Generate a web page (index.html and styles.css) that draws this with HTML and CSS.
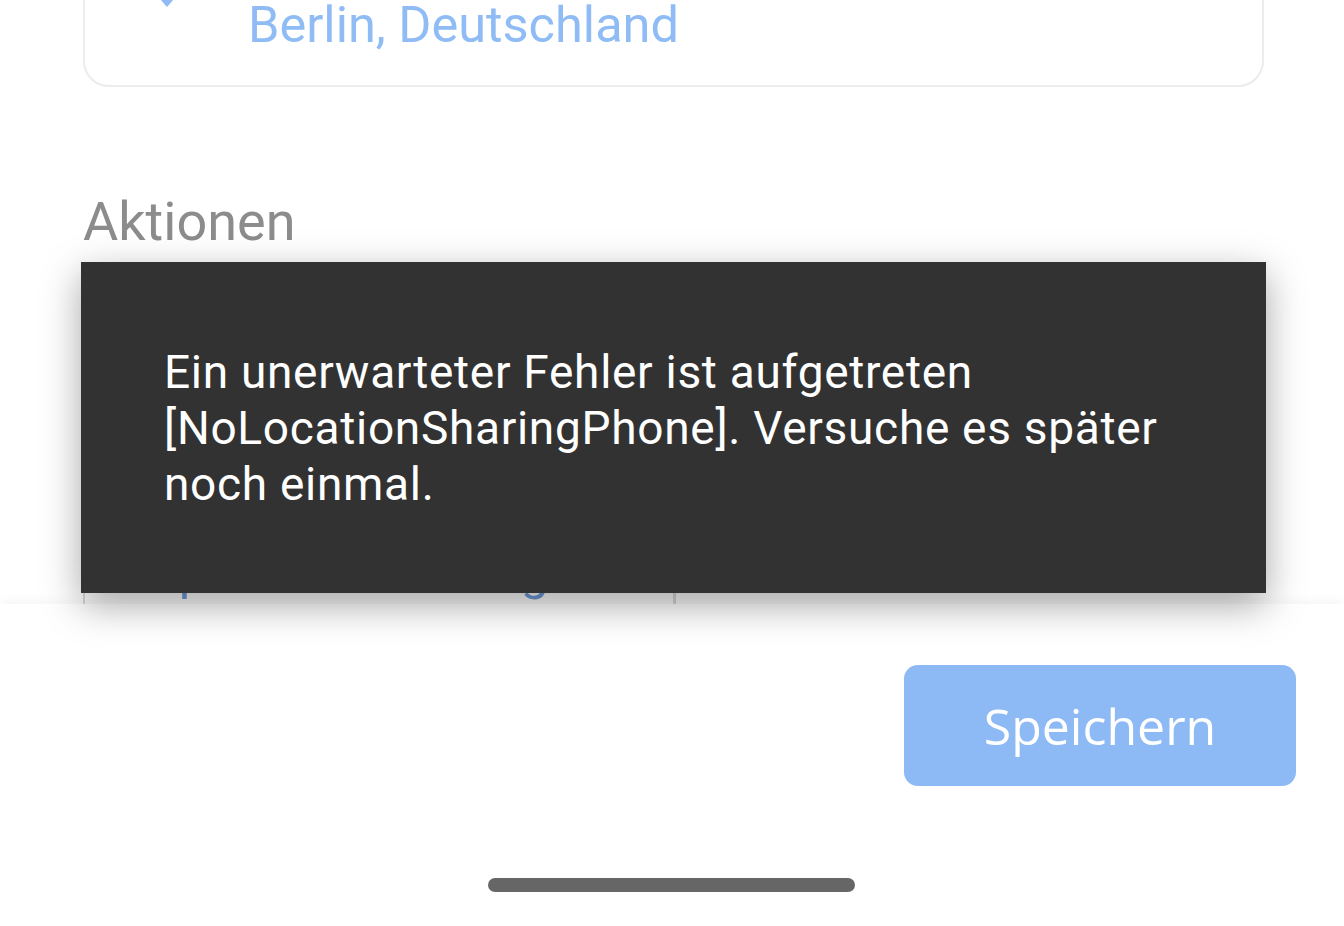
FILE: index.html
```html
<!DOCTYPE html>
<html lang="de">
<head>
    <meta charset="UTF-8">
    <meta name="viewport" content="width=device-width, initial-scale=1.0">
    <title>Aktionen</title>
    <link rel="stylesheet" href="styles.css">
</head>
<body>
    <div class="screen">
        <div class="content">
            <div class="location-card">
                <svg class="pin" width="48" height="60" viewBox="0 0 24 30">
                    <path d="M12 2C7.6 2 4 5.6 4 10c0 5.8 8 14 8 14s8-8.2 8-14c0-4.4-3.6-8-8-8zm0 11a3 3 0 1 1 0-6 3 3 0 0 1 0 6z" fill="#8fbcf5"/>
                </svg>
                <div class="location-value">Berlin, Deutschland</div>
            </div>

            <h2 class="section-title">Aktionen</h2>

            <div class="actions-card">
                <div class="action">Später erneut fragen</div>
                <div class="action">Teilen</div>
            </div>
        </div>

        <div class="snackbar">
            <p>Ein unerwarteter Fehler ist aufgetreten [NoLocationSharingPhone]. Versuche es später noch einmal.</p>
        </div>

        <div class="bottom-bar">
            <div class="bar-row">
                <button class="save-button">Speichern</button>
            </div>
            <div class="home-indicator"></div>
        </div>
    </div>
</body>
</html>
```

FILE: styles.css
```css
body {
    margin: 0;
    padding: 0;
    background: #fff;
    font-family: Roboto, "Liberation Sans", sans-serif;
    overflow: hidden;
}

.screen {
    position: relative;
    width: 1344px;
    height: 926px;
    overflow: hidden;
}

.content {
    padding: 0 80px 0 83px;
    margin-top: -93px;
}

.location-card {
    display: flex;
    align-items: flex-end;
    height: 180px;
    border: 2px solid #ececec;
    border-radius: 26px;
    box-sizing: border-box;
    padding: 0 0 35px 58px;
}

.pin {
    margin-bottom: 31px;
    margin-right: 57px;
}

.location-value {
    font-size: 50.5px;
    line-height: 50px;
    color: #8fbcf5;
}

.section-title {
    margin: 103px 0 0;
    font-size: 54px;
    line-height: 64px;
    font-weight: 400;
    color: #8c8c8c;
}

.actions-card {
    display: flex;
    margin-top: 20px;
    height: 400px;
    border: 2px solid #dcdcdc;
    border-right: none;
    border-radius: 20px 0 0 20px;
}

.action {
    flex: 1;
    padding: 267px 0 0 64px;
    font-size: 50px;
    color: #6f9ddb;
}

.action + .action {
    border-left: 3px solid #dcdcdc;
}

.snackbar {
    position: absolute;
    left: 81px;
    top: 262px;
    width: 1185px;
    height: 331px;
    box-sizing: border-box;
    padding: 0 83px;
    display: flex;
    align-items: center;
    background: #323232;
    box-shadow: 0 12px 36px rgba(0, 0, 0, 0.35);
    z-index: 3;
}

.snackbar p {
    margin: 0;
    color: #fff;
    font-size: 46px;
    line-height: 56px;
    letter-spacing: 0.7px;
}

.bottom-bar {
    position: absolute;
    left: 0;
    right: 0;
    bottom: 0;
    height: 322px;
    background: #fff;
    box-shadow: 0 -2px 12px rgba(0, 0, 0, 0.05);
    z-index: 2;
}

.bar-row {
    display: flex;
    justify-content: flex-end;
    padding: 61px 48px 0 0;
}

.save-button {
    width: 392px;
    height: 121px;
    border: none;
    border-radius: 14px;
    background: #8db9f4;
    color: #fff;
    font-family: "Open Sans", sans-serif;
    font-size: 50px;
    font-weight: 500;
}

.home-indicator {
    width: 367px;
    height: 14px;
    margin: 92px 0 0 488px;
    border-radius: 7px;
    background: #666;
}
```
